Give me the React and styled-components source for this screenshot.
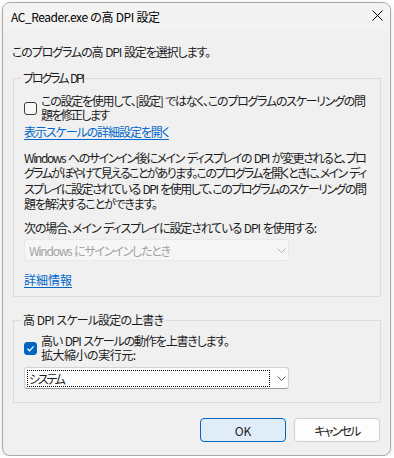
import React, { useLayoutEffect, useRef, useState } from "react";
import styled, { createGlobalStyle } from "styled-components";

const Global = createGlobalStyle`
  html, body { margin: 0; padding: 0; background: #ffffff; }
  body {
    font-family: "Noto Sans CJK JP", "Noto Sans", sans-serif;
    font-size: 12px;
    color: #1b1b1b;
    font-feature-settings: "palt";
  }
  * { box-sizing: border-box; }
`;

const Window = styled.div`
  margin: 2px 0 0 2px;
  width: 389px;
  height: 454px;
  border: 1px solid #a8a8a8;
  border-radius: 8px;
  background: #f0f0f0;
  overflow: hidden;
  box-shadow: 0 2px 6px rgba(0, 0, 0, 0.12);
  display: flex;
  flex-direction: column;
`;

const TitleBar = styled.div`
  height: 27px;
  flex: none;
  background: #f3f3f3;
  display: flex;
  align-items: center;
  justify-content: space-between;
  padding: 0 7px 0 8px;
`;

const Title = styled.div`
  font-size: 12px;
  line-height: 16px;
  color: #000;
`;

const Close = styled.svg`
  width: 11px;
  height: 11px;
  margin-top: -2px;
`;

const Body = styled.div`
  padding: 14px 9px 0 9px;
  display: flex;
  flex-direction: column;
`;

const Intro = styled.div`
  line-height: 16px;
  margin-bottom: 10px;
`;

const Group = styled.fieldset`
  margin: ${(p) => p.$mt || 0}px 0 0 1px;
  width: 368px;
  padding: 0;
  border: 1px solid #dcdcdc;
  border-radius: 0;
  min-width: 0;
`;

const Legend = styled.legend`
  margin-left: 7px;
  padding: 0 2px;
  line-height: 16px;
`;

const GroupInner = styled.div`
  padding: ${(p) => p.$pt}px 10px ${(p) => p.$pb}px 10px;
  display: flex;
  flex-direction: column;
  align-items: flex-start;
`;

const CheckRow = styled.label`
  display: flex;
  align-items: center;
  gap: 4px;
`;

const Box = styled.span`
  width: 13px;
  height: 13px;
  flex: none;
  border-radius: 3px;
  border: 1px solid ${(p) => (p.$checked ? "#0067c0" : "#3c3c3c")};
  background: ${(p) => (p.$checked ? "#0067c0" : "#f7f7f7")};
  display: flex;
  align-items: center;
  justify-content: center;
`;

const CheckText = styled.span`
  line-height: 14px;
`;

const Link = styled.a`
  color: #0066cc;
  text-decoration: underline;
  text-underline-offset: 2px;
  line-height: 15px;
  margin-top: ${(p) => p.$mt || 0}px;
  cursor: pointer;
`;

const Para = styled.p`
  margin: ${(p) => p.$mt || 0}px 0 0 0;
  line-height: 15.3px;
`;

const Combo = styled.div`
  margin-top: ${(p) => p.$mt}px;
  width: 265px;
  height: 22px;
  border-radius: 3px;
  border: 1px solid ${(p) => (p.$disabled ? "#e8e8e8" : "#d2d2d2")};
  border-bottom-color: ${(p) => (p.$disabled ? "#e8e8e8" : "#9a9a9a")};
  background: ${(p) => (p.$disabled ? "#f6f6f6" : "#fdfdfd")};
  color: ${(p) => (p.$disabled ? "#a3a3a3" : "#1b1b1b")};
  display: flex;
  align-items: center;
  padding: 0 0 0 2px;
`;

const ComboValue = styled.div`
  flex: none;
  width: 243px;
  height: 17px;
  line-height: 15px;
  padding-left: 1px;
  border: 1px dotted ${(p) => (p.$focus ? "#000" : "transparent")};
`;

const Chevron = styled.svg`
  width: 9px;
  height: 5px;
  margin-left: 7px;
`;

const Buttons = styled.div`
  margin: 15px 1px 0 0;
  display: flex;
  justify-content: flex-end;
  gap: 8px;
`;

const Button = styled.button`
  width: 86px;
  height: 24px;
  border-radius: 4px;
  font-family: inherit;
  font-size: 12px;
  font-feature-settings: "palt";
  color: #1b1b1b;
  padding: 0;
  border: 1px solid ${(p) => (p.$primary ? "#0067c0" : "#d0d0d0")};
  background: ${(p) => (p.$primary ? "#e0ecf8" : "#fdfdfd")};
  display: flex;
  align-items: center;
  justify-content: center;
`;

/* A line of text whose letter spacing is fitted at run time so that its
   width equals the width measured on the reference; spaces keep their width. */
const LineText = styled.span`
  display: ${(p) => (p.$inline ? "inline-block" : "block")};
  width: max-content;
  white-space: pre;
`;

function Fit({ w, inline, children }) {
  const ref = useRef(null);
  const [ls, setLs] = useState(0);
  useLayoutEffect(() => {
    const el = ref.current;
    if (!el) return;
    const natural = el.getBoundingClientRect().width;
    const chars = Array.from(el.textContent).filter((c) => c !== " ").length;
    if (chars > 1) setLs((w - natural) / (chars - 1));
  }, [w]);
  return (
    <LineText
      ref={ref}
      $inline={inline}
      style={{ letterSpacing: `${ls}px`, wordSpacing: `${-ls}px` }}
    >
      {children}
    </LineText>
  );
}

const Check = () => (
  <svg width="11" height="11" viewBox="0 0 11 11">
    <polyline points="2.5,5.8 4.6,7.8 8.6,3.4" fill="none" stroke="#fff" strokeWidth="1.2" />
  </svg>
);

const ChevronIcon = ({ color }) => (
  <Chevron viewBox="0 0 9 5">
    <polyline points="0.5,0.5 4.5,4.5 8.5,0.5" fill="none" stroke={color} strokeWidth="1" />
  </Chevron>
);

export default function App() {
  return (
    <>
      <Global />
      <Window>
        <TitleBar>
          <Title>
            <Fit w={149}>AC_Reader.exe の高 DPI 設定</Fit>
          </Title>
          <Close viewBox="0 0 11 11">
            <line x1="0.5" y1="0.5" x2="10.5" y2="10.5" stroke="#000" strokeWidth="1" />
            <line x1="10.5" y1="0.5" x2="0.5" y2="10.5" stroke="#000" strokeWidth="1" />
          </Close>
        </TitleBar>
        <Body>
          <Intro>
            <Fit w={199}>このプログラムの高 DPI 設定を選択します。</Fit>
          </Intro>
          <Group>
            <Legend>
              <Fit w={62}>プログラム DPI</Fit>
            </Legend>
            <GroupInner $pt={8} $pb={9}>
              <CheckRow>
                <Box />
                <CheckText>
                  <Fit w={325}>この設定を使用して、[設定] ではなく、このプログラムのスケーリングの問</Fit>
                  <Fit w={69}>題を修正します</Fit>
                </CheckText>
              </CheckRow>
              <Link $mt={2}>
                <Fit w={146}>表示スケールの詳細設定を開く</Fit>
              </Link>
              <Para $mt={11}>
                <Fit w={343}>Windows へのサインイン後にメイン ディスプレイの DPI が変更されると、プロ</Fit>
                <Fit w={343}>グラムがぼやけて見えることがあります。このプログラムを開くときに、メイン ディ</Fit>
                <Fit w={343}>スプレイに設定されている DPI を使用して、このプログラムのスケーリングの問</Fit>
                <Fit w={134}>題を解決することができます。</Fit>
              </Para>
              <Para $mt={9}>
                <Fit w={293}>次の場合、メイン ディスプレイに設定されている DPI を使用する:</Fit>
              </Para>
              <Combo $mt={4} $disabled>
                <ComboValue>
                  <Fit w={142}>Windows にサインインしたとき</Fit>
                </ComboValue>
                <ChevronIcon color="#b0b0b0" />
              </Combo>
              <Link $mt={11}>
                <Fit w={48}>詳細情報</Fit>
              </Link>
            </GroupInner>
          </Group>
          <Group $mt={15}>
            <Legend>
              <Fit w={141}>高 DPI スケール設定の上書き</Fit>
            </Legend>
            <GroupInner $pt={6} $pb={13}>
              <CheckRow>
                <Box $checked>
                  <Check />
                </Box>
                <CheckText>
                  <Fit w={189}>高い DPI スケールの動作を上書きします。</Fit>
                  <Fit w={95}>拡大縮小の実行元:</Fit>
                </CheckText>
              </CheckRow>
              <Combo $mt={5}>
                <ComboValue $focus>
                  <Fit w={37}>システム</Fit>
                </ComboValue>
                <ChevronIcon color="#5a5a5a" />
              </Combo>
            </GroupInner>
          </Group>
          <Buttons>
            <Button $primary>OK</Button>
            <Button>
              <Fit w={47} inline>キャンセル</Fit>
            </Button>
          </Buttons>
        </Body>
      </Window>
    </>
  );
}
